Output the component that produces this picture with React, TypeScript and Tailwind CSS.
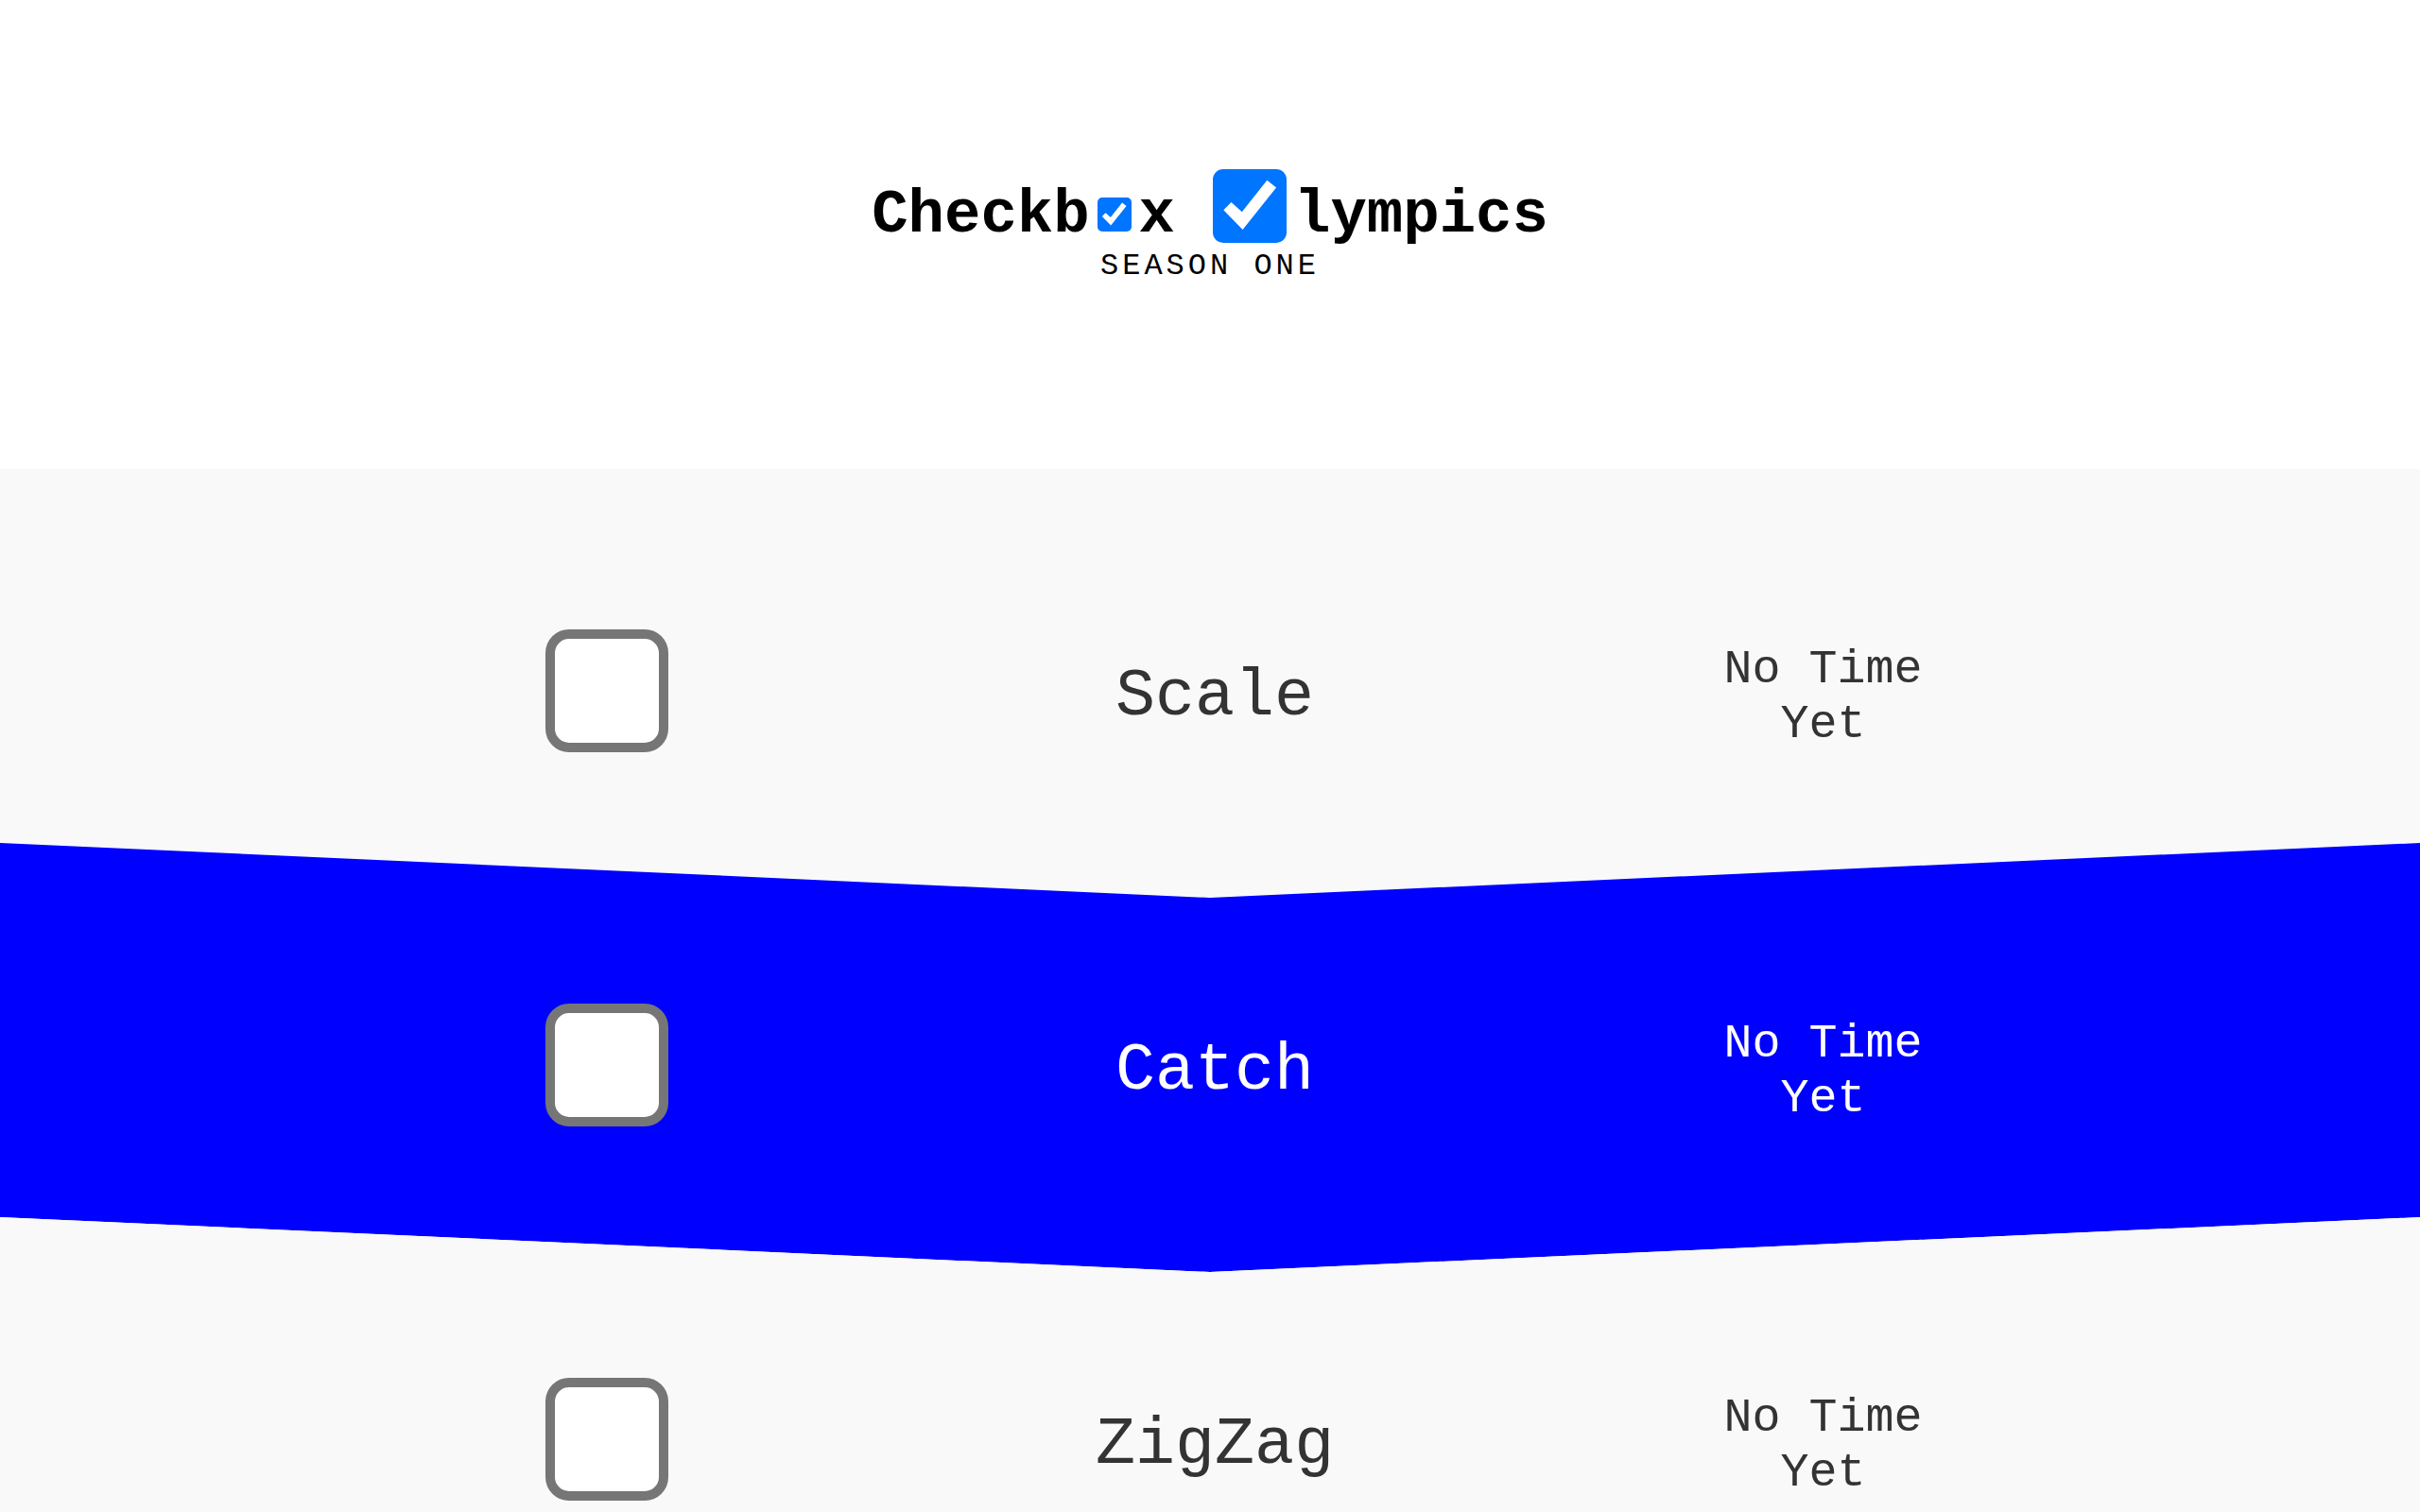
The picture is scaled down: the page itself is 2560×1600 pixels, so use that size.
import { useState } from "react";
import clsx from "clsx";

interface IGame {
  id: string;
  name: string;
  time: string | null;
}

interface ICheckboxProps extends React.InputHTMLAttributes<HTMLInputElement> {
  className?: string;
}

const games: IGame[] = [
  { id: "scale", name: "Scale", time: null },
  { id: "catch", name: "Catch", time: null },
  { id: "zigzag", name: "ZigZag", time: null },
];

function Checkbox({ className, ...props }: ICheckboxProps) {
  return (
    <input
      type="checkbox"
      className={clsx(
        "appearance-none border-[#767676] bg-white checked:border-0 checked:bg-[#0075ff]",
        "before:block before:size-full before:bg-white before:[clip-path:polygon(14.5%_55.5%,25%_45%,39.5%_58%,73.5%_15%,86%_25%,40.5%_82%)]",
        className,
      )}
      {...props}
    />
  );
}

function Header() {
  return (
    <header className="bg-white pt-[167px] pb-[200px] text-center text-black">
      <h1 className="flex items-baseline justify-center text-[64px] leading-[80px] font-bold">
        <span>Checkb</span>
        <Checkbox
          aria-label="o"
          defaultChecked
          className="mx-2 size-9 rounded-[5px]"
        />
        <span>x</span>
        <Checkbox
          aria-label="O"
          defaultChecked
          className="mr-2 ml-10 size-[78px] translate-y-3 rounded-[11px]"
        />
        <span>lympics</span>
      </h1>
      <p className="text-[32px] leading-[28px] tracking-[4px]">SEASON ONE</p>
    </header>
  );
}

function GameRow({ game, isBlue }: { game: IGame; isBlue: boolean }) {
  const [checked, setChecked] = useState(false);

  return (
    <li
      className={clsx(
        "-mb-[58px] grid h-[454px] grid-cols-3 items-center justify-items-center pt-4 pr-[12.1%] pl-[12.5%] [clip-path:polygon(0_0,50%_58px,100%_0,100%_calc(100%-58px),50%_100%,0_calc(100%-58px))]",
        isBlue ? "bg-[#0000ff] text-white" : "bg-[#f9f9f9] text-[#333333]",
      )}
    >
      <Checkbox
        id={game.id}
        checked={checked}
        onChange={(e) => setChecked(e.target.checked)}
        className="size-[130px] rounded-[25px] border-10"
      />
      <label htmlFor={game.id} className="pt-3.5 text-[70px] leading-[80px]">
        {game.name}
      </label>
      <p className="w-60 pt-3.5 text-center text-[50px] leading-[58px]">
        {game.time ?? "No Time Yet"}
      </p>
    </li>
  );
}

export default function App() {
  return (
    <main className="min-h-screen bg-[#f9f9f9] font-['Liberation_Mono',monospace]">
      <Header />
      <ul className="pb-[58px]">
        {games.map((game, i) => (
          <GameRow key={game.id} game={game} isBlue={i % 2 === 1} />
        ))}
      </ul>
    </main>
  );
}
